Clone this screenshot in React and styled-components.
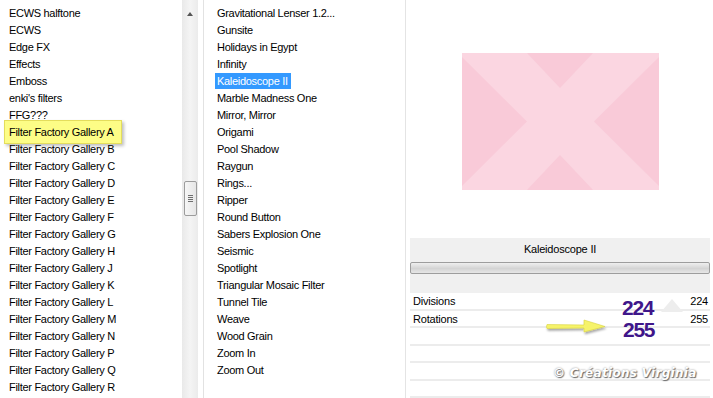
import React from 'react';
import styled, { createGlobalStyle } from 'styled-components';

const GlobalStyle = createGlobalStyle`
  html, body {
    margin: 0;
    padding: 0;
    background: #fff;
  }
  body {
    font-family: "Liberation Sans", Arial, sans-serif;
    font-size: 11px;
    color: #000;
  }
`;

const Window = styled.div`
  position: relative;
  width: 713px;
  height: 398px;
  display: flex;
  background: #fff;
  overflow: hidden;
`;

const List = styled.ul`
  list-style: none;
  margin: 0;
  padding: ${props => `5px 0 0 ${props.indent}px`};
  width: ${props => props.width}px;
  box-sizing: border-box;
  flex-shrink: 0;
`;

const Item = styled.li`
  height: 17px;
  line-height: 17px;
  letter-spacing: -0.3px;
  white-space: nowrap;
  width: fit-content;
  ${props => props.selected && `
    background: #3399ff;
    color: #fff;
    margin-left: -2px;
    padding: 0 3px 0 2px;
    height: 16px;
    line-height: 16px;
    margin-bottom: 1px;
  `}
  ${props => props.marked && `
    position: relative;
    z-index: 1;
    margin: -4px 0 -3px -5px;
    padding: 3px 7px 2px 4px;
    background: #fdfd86;
    border: 1px solid #e4dd5c;
    box-shadow: 2px 2px 3px rgba(0, 0, 0, 0.25);
  `}
`;

const ScrollBar = styled.div`
  width: 16px;
  flex-shrink: 0;
  display: flex;
  flex-direction: column;
  align-items: center;
  background: linear-gradient(90deg, #e9e9e9, #f4f4f4 50%, #ebebeb);
`;

const UpArrow = styled.div`
  margin-top: 12px;
  width: 0;
  height: 0;
  border-left: 3px solid transparent;
  border-right: 3px solid transparent;
  border-bottom: 4px solid #555;
`;

const Thumb = styled.div`
  margin-top: 165px;
  width: 13px;
  height: 35px;
  box-sizing: border-box;
  border: 1px solid #9c9c9c;
  border-radius: 2px;
  background: linear-gradient(90deg, #f6f6f6, #e6e6e6);
  display: flex;
  flex-direction: column;
  align-items: center;
  justify-content: center;
  gap: 1px;
`;

const Grip = styled.span`
  display: block;
  width: 5px;
  height: 1px;
  background: #6e6e6e;
`;

const Gutter = styled.div`
  width: 6px;
  flex-shrink: 0;
  border-right: 1px solid #e2e2e2;
  box-sizing: border-box;
`;

const MiddlePane = styled.div`
  width: 202px;
  flex-shrink: 0;
  border-right: 1px solid #e4e4e4;
  box-sizing: border-box;
`;

const RightPane = styled.div`
  flex: 1;
  display: flex;
  flex-direction: column;
`;

const Preview = styled.div`
  height: 238px;
  box-sizing: border-box;
  padding: 53px 0 0 2px;
  display: flex;
  justify-content: center;
`;

const Settings = styled.div`
  margin: 0 3px 0 4px;
  display: flex;
  flex-direction: column;
`;

const Header = styled.div`
  background: #f0f0f0;
  padding: 5px 0 19px;
  display: flex;
  flex-direction: column;
`;

const Title = styled.div`
  text-align: center;
  line-height: 13px;
  letter-spacing: -0.2px;
`;

const Slider = styled.div`
  margin-top: 6px;
  height: 12px;
  box-sizing: border-box;
  border: 1px solid #9d9d9d;
  border-radius: 2px;
  background: linear-gradient(180deg, #efefef, #d4d4d4 55%, #e6e6e6);
`;

const Row = styled.div`
  height: 17.5px;
  line-height: 17px;
  display: flex;
  justify-content: space-between;
  padding: 0 2px 0 3px;
  border-bottom: 2px solid #ececec;
  box-sizing: border-box;
  letter-spacing: -0.2px;
  &:first-child {
    border-top: 1px solid #f4f4f4;
  }
`;

const BigNumber = styled.div`
  position: absolute;
  left: ${props => props.x}px;
  top: ${props => props.y}px;
  font-family: "Liberation Sans", Arial, sans-serif;
  font-weight: bold;
  font-size: 21px;
  letter-spacing: -1.3px;
  color: #3f168a;
  line-height: 1;
`;

const Overlay = styled.svg`
  position: absolute;
  left: ${props => props.x}px;
  top: ${props => props.y}px;
`;

const Watermark = styled.div`
  position: absolute;
  left: 553px;
  top: 366px;
  font-family: "DejaVu Sans", sans-serif;
  font-weight: bold;
  font-style: italic;
  font-size: 12px;
  letter-spacing: 0.3px;
  color: #fff;
  text-shadow: 1px 1px 1px #6a6a6a, 0 0 2px #8a8a8a;
`;

const categories = [
  'ECWS halftone', 'ECWS', 'Edge FX', 'Effects', 'Emboss', "enki's filters", 'FFG???',
  'Filter Factory Gallery A', 'Filter Factory Gallery B', 'Filter Factory Gallery C',
  'Filter Factory Gallery D', 'Filter Factory Gallery E', 'Filter Factory Gallery F',
  'Filter Factory Gallery G', 'Filter Factory Gallery H', 'Filter Factory Gallery J',
  'Filter Factory Gallery K', 'Filter Factory Gallery L', 'Filter Factory Gallery M',
  'Filter Factory Gallery N', 'Filter Factory Gallery P', 'Filter Factory Gallery Q',
  'Filter Factory Gallery R',
];

const filters = [
  'Gravitational Lenser 1.2...', 'Gunsite', 'Holidays in Egypt', 'Infinity', 'Kaleidoscope II',
  'Marble Madness One', 'Mirror, Mirror', 'Origami', 'Pool Shadow', 'Raygun', 'Rings...',
  'Ripper', 'Round Button', 'Sabers Explosion One', 'Seismic', 'Spotlight',
  'Triangular Mosaic Filter', 'Tunnel Tile', 'Weave', 'Wood Grain', 'Zoom In', 'Zoom Out',
];

const params = [
  { name: 'Divisions', value: 224 },
  { name: 'Rotations', value: 255 },
  { name: '', value: '' },
  { name: '', value: '' },
  { name: '', value: '' },
  { name: '', value: '' },
];

const PreviewImage = () => (
  <svg width="197" height="137" viewBox="0 0 197 137">
    <rect width="197" height="137" fill="#fbd6e1" />
    <polygon points="65,0 131,0 98,35" fill="#f9cad8" />
    <polygon points="65,137 131,137 98,102" fill="#f9cad8" />
    <polygon points="0,4 65,68.5 0,133" fill="#f9cad8" />
    <polygon points="197,4 132,68.5 197,133" fill="#f9cad8" />
  </svg>
);

export default function App() {
  return (
    <>
      <GlobalStyle />
      <Window>
        <List width={182} indent={9}>
          {categories.map(name => (
            <Item key={name} marked={name === 'Filter Factory Gallery A'}>{name}</Item>
          ))}
        </List>
        <ScrollBar>
          <UpArrow />
          <Thumb>
            <Grip /><Grip /><Grip /><Grip />
          </Thumb>
        </ScrollBar>
        <Gutter />
        <MiddlePane>
          <List width={200} indent={13}>
            {filters.map(name => (
              <Item key={name} selected={name === 'Kaleidoscope II'}>{name}</Item>
            ))}
          </List>
        </MiddlePane>
        <RightPane>
          <Preview>
            <PreviewImage />
          </Preview>
          <Settings>
            <Header>
              <Title>Kaleidoscope II</Title>
              <Slider />
            </Header>
            {params.map((p, i) => (
              <Row key={i}>
                <span>{p.name}</span>
                <span>{p.value}</span>
              </Row>
            ))}
          </Settings>
        </RightPane>

        <Overlay x={661} y={299} width="22" height="13" viewBox="0 0 22 13">
          <polygon points="11,0 22,13 0,13" fill="#ededed" />
        </Overlay>
        <BigNumber x={622} y={297}>224</BigNumber>
        <BigNumber x={623} y={319}>255</BigNumber>
        <Overlay x={544} y={318} width="66" height="18" viewBox="0 0 66 18">
          <defs>
            <filter id="sh" x="-10%" y="-30%" width="130%" height="180%">
              <feDropShadow dx="1" dy="2" stdDeviation="1.2" floodColor="#000" floodOpacity="0.35" />
            </filter>
          </defs>
          <g filter="url(#sh)">
            <path d="M3 6.5 Q2 8.5 3 10.5 L40 10 L40 14 L61 8.5 L40 2 L40 7 Z" fill="#f6f36a" stroke="#d9d43e" strokeWidth="0.6" />
          </g>
        </Overlay>
        <Watermark>© Créations Virginia</Watermark>
      </Window>
    </>
  );
}
